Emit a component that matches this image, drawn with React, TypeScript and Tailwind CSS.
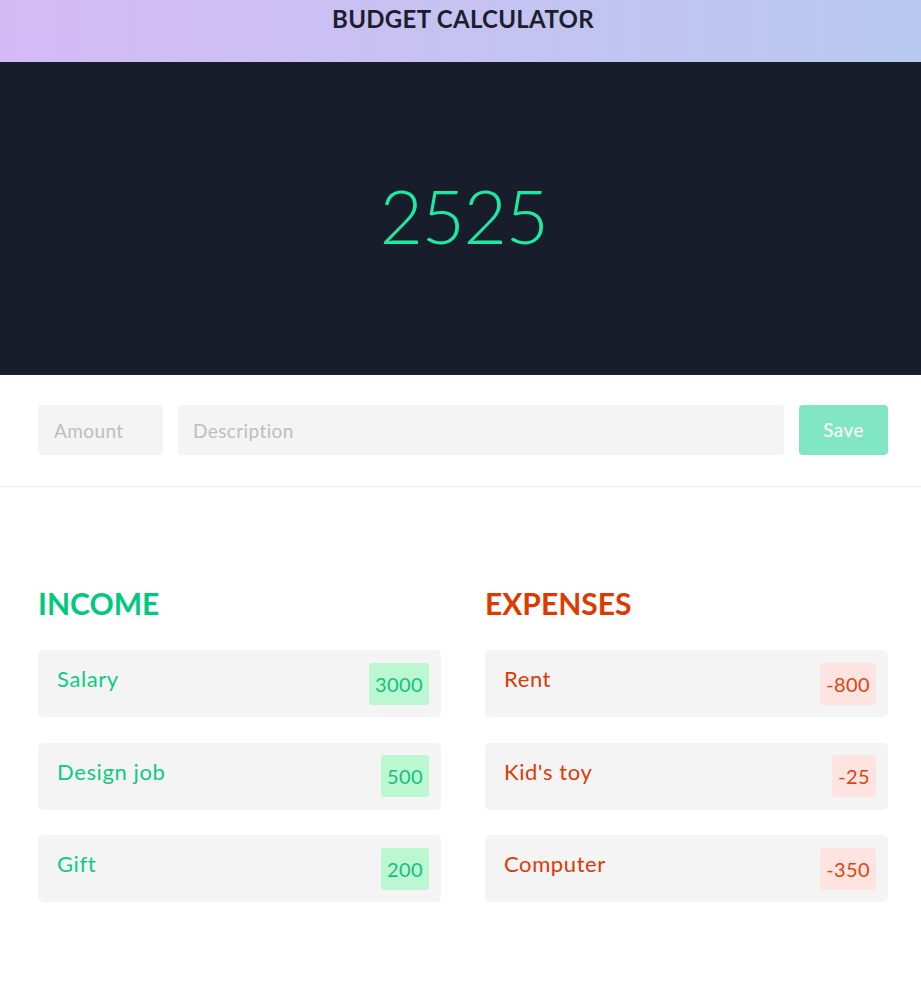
import React from "react";

const income = [
  { name: "Salary", amount: "3000" },
  { name: "Design job", amount: "500" },
  { name: "Gift", amount: "200" },
];
const expenses = [
  { name: "Rent", amount: "-800" },
  { name: "Kid's toy", amount: "-25" },
  { name: "Computer", amount: "-350" },
];

function Card({ name, amount, kind }: { name: string; amount: string; kind: "in" | "out" }) {
  const textCls = kind === "in" ? "text-[#0ccb82]" : "text-[#dc3a06]";
  const badgeCls = kind === "in" ? "bg-[#bbf7d0] text-[#12c17f]" : "bg-[#fee4e0] text-[#e0440e]";
  return (
    <div className="h-[67px] bg-[#f4f4f4] rounded-[5px] flex items-center justify-between pl-[19px] pr-[12px]">
      <span className={`${textCls} text-[22px] leading-none tracking-[0.6px] -mt-[9px]`}>{name}</span>
      <span className={`${badgeCls} h-[42px] px-[6px] rounded-[3px] flex items-center text-[20px] tracking-[0.4px]`}>{amount}</span>
    </div>
  );
}

export default function App() {
  return (
    <div className="bg-white font-['Lato',sans-serif]">
      <header className="h-[62px] bg-gradient-to-r from-[#d4baf5] to-[#b7c9ee] flex justify-center pl-[5px]">
        <h1 className="text-[24px] font-bold text-[#1a1f2e] tracking-[0.3px] mt-[4px] leading-[30px]">BUDGET CALCULATOR</h1>
      </header>
      <section className="h-[313px] bg-[#171d2b] flex items-center justify-center pl-[6px]">
        <div className="text-[#1ee9a2] text-[75px] font-light leading-none -tracking-[1.5px] -mt-[6px]">2525</div>
      </section>
      <div className="pl-[38px] pr-[33px] pt-[30px] pb-[31px] flex gap-[15px] border-b border-[#ededed]">
        <input
          placeholder="Amount"
          className="w-[125px] h-[50px] bg-[#f4f4f4] rounded-[4px] px-[16px] text-[19px] tracking-[0.4px] placeholder:text-[#bdbdbd] outline-none"
        />
        <input
          placeholder="Description"
          className="flex-1 h-[50px] bg-[#f4f4f4] rounded-[4px] px-[15px] text-[19px] tracking-[0.4px] placeholder:text-[#bdbdbd] outline-none"
        />
        <button className="w-[89px] h-[50px] bg-[#80e6c4] rounded-[4px] text-white text-[19px] font-medium tracking-[0.4px]">Save</button>
      </div>
      <div className="pl-[38px] pr-[33px] pt-[101px] pb-[86px] grid grid-cols-2 gap-[44px]">
        <div>
          <h2 className="text-[30px] font-bold text-[#00c97f] leading-none mb-[32px]">INCOME</h2>
          <div className="flex flex-col gap-[25.5px]">
            {income.map((i) => (
              <Card key={i.name} name={i.name} amount={i.amount} kind="in" />
            ))}
          </div>
        </div>
        <div>
          <h2 className="text-[30px] font-bold text-[#dd3a00] leading-none mb-[32px]">EXPENSES</h2>
          <div className="flex flex-col gap-[25.5px]">
            {expenses.map((i) => (
              <Card key={i.name} name={i.name} amount={i.amount} kind="out" />
            ))}
          </div>
        </div>
      </div>
    </div>
  );
}
